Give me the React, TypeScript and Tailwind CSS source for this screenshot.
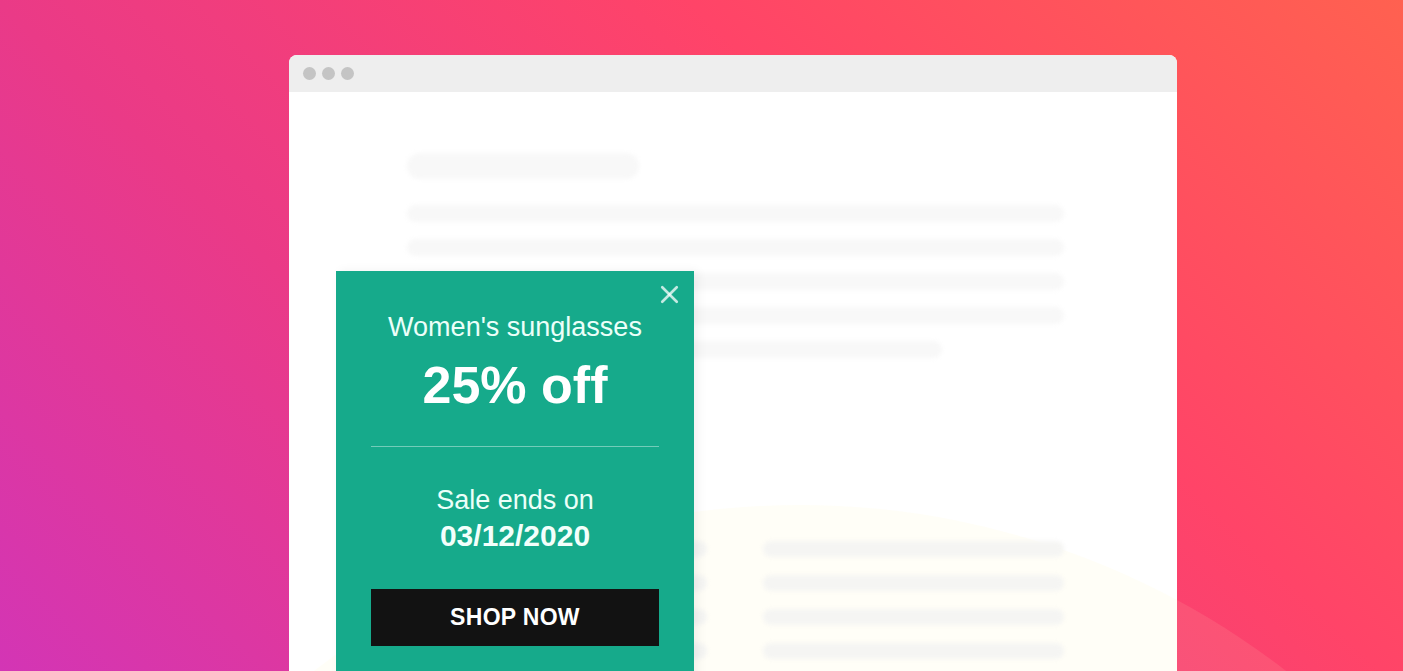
import { X } from 'lucide-react'

const topLines = ['w-[657px]', 'w-[657px]', 'w-[657px]', 'w-[657px]', 'w-[535px]']
const bottomRows = [0, 1, 2, 3]

export default function App() {
  return (
    <div className="relative h-[671px] w-full overflow-hidden bg-[linear-gradient(44deg,#d335b5_0%,#ea3a87_33%,#ff4468_66%,#ff6150_100%)] pt-[55px] font-['Liberation_Sans',Arial,sans-serif]">
      {/* Soft light shape behind the window */}
      <div className="pointer-events-none absolute left-[5px] top-[505px] h-[1590px] w-[1590px] rounded-full bg-[rgba(255,240,200,0.10)]" />

      {/* Browser window */}
      <div className="relative ml-[289px] h-[640px] w-[888px] overflow-hidden rounded-t-[8px] bg-white">
        {/* Title bar */}
        <div className="flex h-[37px] items-center gap-[6px] bg-[#eeeeee] pl-[14px]">
          <span className="h-[13px] w-[13px] rounded-full bg-[#c4c4c4]" />
          <span className="h-[13px] w-[13px] rounded-full bg-[#c4c4c4]" />
          <span className="h-[13px] w-[13px] rounded-full bg-[#c4c4c4]" />
        </div>

        {/* Light tint inside the window */}
        <div className="pointer-events-none absolute left-[-284px] top-[450px] h-[1590px] w-[1590px] rounded-full bg-[rgba(255,250,210,0.18)]" />

        {/* Skeleton page */}
        <div className="pl-[118px] pt-[61px] blur-[2px]">
          <div className="h-[26px] w-[232px] rounded-full bg-[#f8f8f8]" />
          <div className="mt-[26px] flex flex-col gap-[17px]">
            {topLines.map((w, i) => (
              <div key={i} className={`h-[17px] rounded-full bg-[#f8f8f8] ${w}`} />
            ))}
          </div>
          <div className="mt-[183px] flex flex-col gap-[18px]">
            {bottomRows.map((r) => (
              <div key={r} className="flex gap-[56px]">
                <div className="ml-[150px] h-[16px] w-[150px] rounded-full bg-[#f5f5f3]" />
                <div className="h-[16px] w-[301px] rounded-full bg-[#f5f5f3]" />
              </div>
            ))}
          </div>
        </div>

        {/* Popup */}
        <div className="absolute left-[47px] top-[216px] flex h-[460px] w-[358px] flex-col items-center bg-[#16aa8b] text-white shadow-[4px_0_10px_rgba(0,0,0,0.06)]">
          <button className="absolute right-[10px] top-[9px] text-white/75">
            <X size={29} strokeWidth={2.2} />
          </button>
          <div className="mt-[41px] text-[27px] leading-[30px] text-[#ecfff9]">Women's sunglasses</div>
          <div className="mt-[15px] text-[52px] font-bold leading-[56px]">25% off</div>
          <div className="mt-[33px] h-px w-[288px] bg-white/40" />
          <div className="mt-[37px] text-[27px] leading-[32px] text-[#ecfff9]">Sale ends on</div>
          <div className="mt-[3px] text-[30px] font-bold leading-[34px] text-[#f3fffb]">03/12/2020</div>
          <button className="mt-[36px] flex h-[57px] w-[288px] items-center justify-center bg-[#121212] text-[23px] font-bold tracking-[0.3px] text-white">
            SHOP NOW
          </button>
        </div>
      </div>
    </div>
  )
}
